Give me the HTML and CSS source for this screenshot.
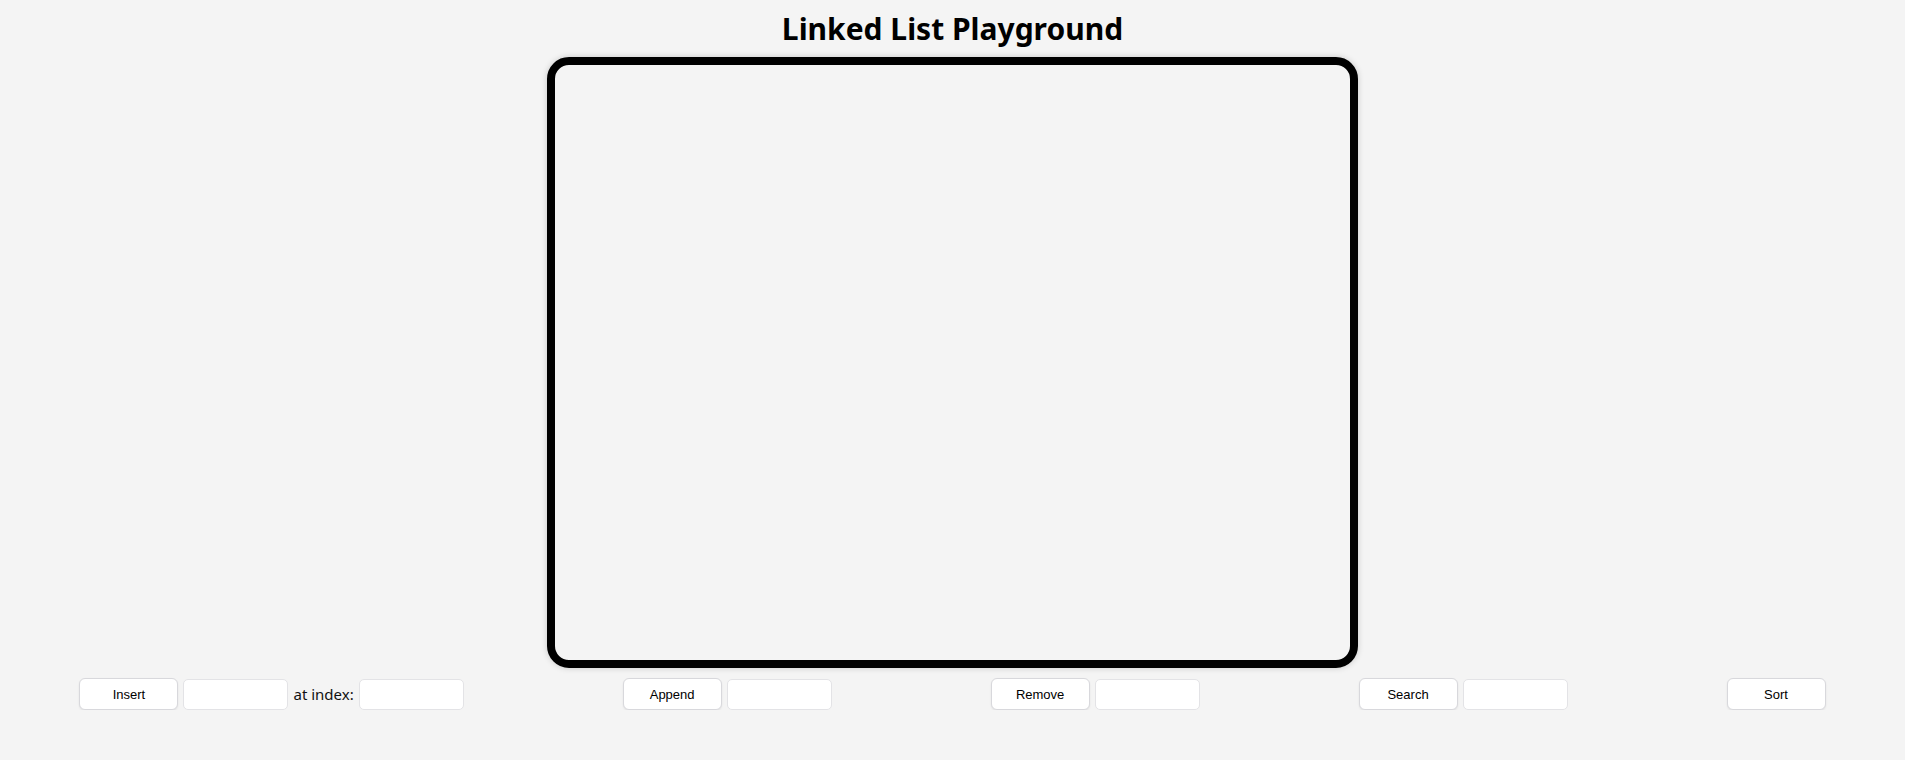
FILE: index.html
```html
<!DOCTYPE html>
<html>
<head>
<meta charset="utf-8">
<title>Linked List Playground</title>
<link rel="stylesheet" href="styles.css">
</head>
<body>
<h1 class="title">Linked List Playground</h1>
<div class="canvas-wrap"><div class="canvas"></div></div>
<div class="controls">
  <div class="group">
    <button class="btn">Insert</button>
    <input class="field" type="text">
    <span class="label">at index:</span>
    <input class="field" type="text">
  </div>
  <div class="group">
    <button class="btn">Append</button>
    <input class="field" type="text">
  </div>
  <div class="group">
    <button class="btn">Remove</button>
    <input class="field" type="text">
  </div>
  <div class="group">
    <button class="btn">Search</button>
    <input class="field" type="text">
  </div>
  <div class="group">
    <button class="btn">Sort</button>
  </div>
</div>
</body>
</html>
```
FILE: styles.css
```css
html, body {
  margin: 0;
  padding: 0;
}
body {
  background: #f4f4f4;
  font-family: "Noto Sans", "Open Sans", sans-serif;
  color: #000;
}
.title {
  margin: 0;
  text-align: center;
  font-size: 30px;
  font-weight: 700;
  line-height: 58px;
  height: 57px;
}
.canvas-wrap {
  display: flex;
  justify-content: center;
}
.canvas {
  box-sizing: border-box;
  width: 811px;
  height: 611px;
  border: 8px solid #000;
  border-radius: 22px;
  box-shadow: 0 0 6px rgba(0, 0, 0, 0.18);
}
.controls {
  display: flex;
  justify-content: space-around;
  align-items: center;
  margin-top: 10px;
}
.group {
  display: flex;
  align-items: center;
  gap: 5px;
}
.btn {
  box-sizing: border-box;
  width: 99px;
  height: 32px;
  background: #fff;
  border: 1px solid #d8d8dc;
  border-radius: 6px;
  box-shadow: 0 1px 2px rgba(0, 0, 0, 0.08);
  font-family: "Liberation Sans", Arial, sans-serif;
  font-size: 13px;
  color: #000;
  padding: 0;
}
.field {
  box-sizing: border-box;
  width: 105px;
  height: 31px;
  background: #fff;
  border: 1px solid #e3e3e6;
  border-radius: 5px;
  padding: 0 6px;
  margin: 0;
}
.label {
  font-size: 15px;
  color: #111;
}
```
